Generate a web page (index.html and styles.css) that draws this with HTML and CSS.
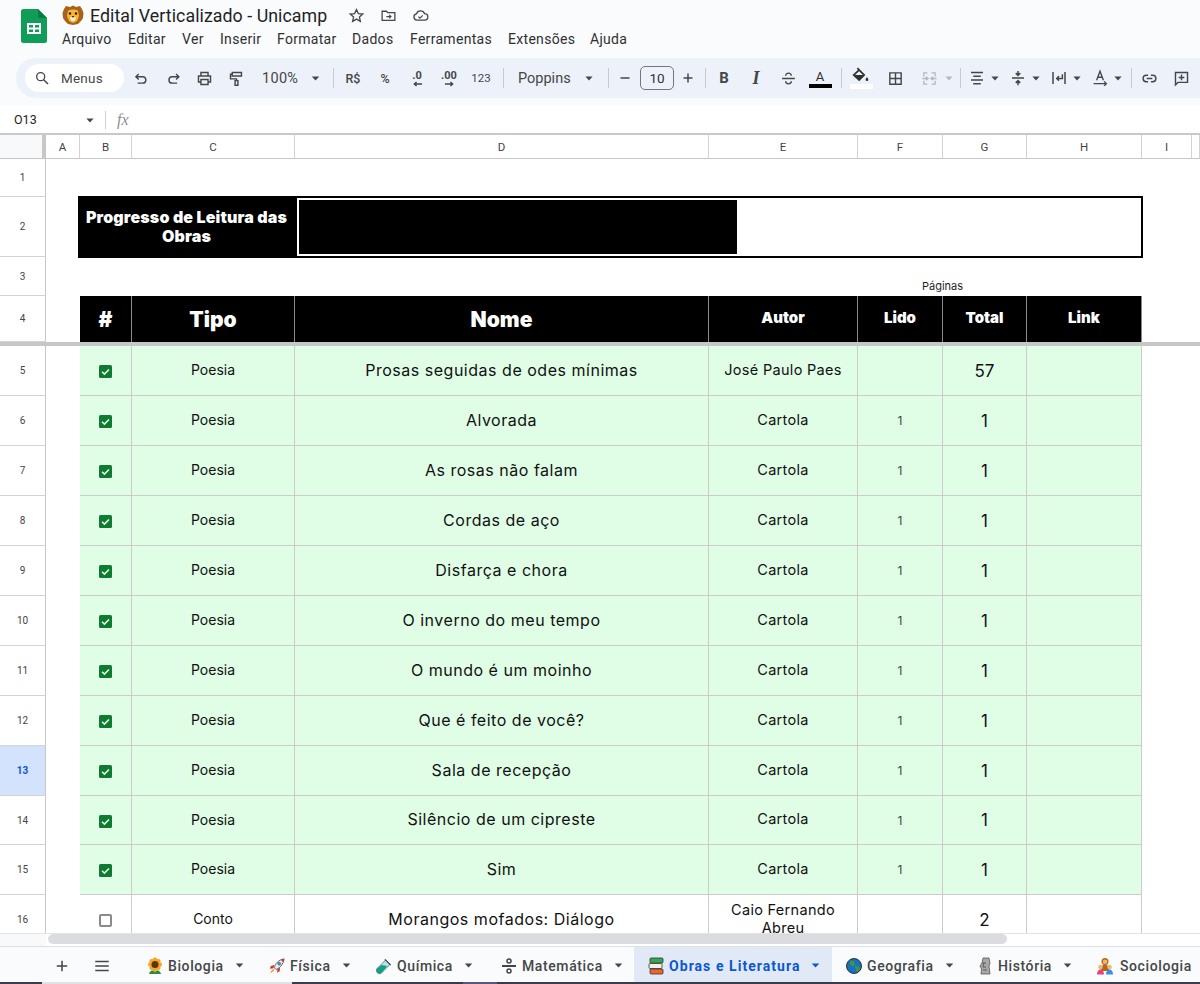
FILE: index.html
```html
<!DOCTYPE html>
<html lang="pt-BR">
<head>
<meta charset="utf-8">
<title>Edital Verticalizado - Unicamp</title>
<link rel="stylesheet" href="styles.css">
</head>
<body>
<svg class="defs" width="0" height="0" aria-hidden="true">
  <symbol id="check" viewBox="0 0 13 13"><rect width="13" height="13" rx="1.500" fill="#0f7b30"/><path d="M3 6.800l2.400 2.300L10 4.400" fill="none" stroke="#e8f8ea" stroke-width="1.500"/></symbol>
  <symbol id="caret" viewBox="0 0 10 6"><path d="M0.500 0.500h9L5 5.500z" fill="currentColor"/></symbol>
</svg>

<header class="titlebar">
  <svg class="logo" viewBox="0 0 26 34"><path d="M2.500 0H17l9 9v22.500a2.500 2.500 0 0 1-2.500 2.500h-21A2.500 2.500 0 0 1 0 31.500V2.500A2.500 2.500 0 0 1 2.500 0z" fill="#0f9d58"/><path d="M17 0l9 9h-7a2 2 0 0 1-2-2z" fill="#0b7a43"/><path d="M6 14h14v11H6z" fill="#fff"/><path d="M8 16h4v2.500H8zM14 16h4v2.500h-4zM8 20.500h4V23H8zM14 20.500h4V23h-4z" fill="#0f9d58"/></svg>
  <div class="titlecol">
    <div class="titleline">
      <svg class="lion" viewBox="0 0 22 20"><path d="M4 1l4 1 3-1.500L14 2l4-1 2 3 1.500 4-.5 5-2 3-3 3-5 1-5-1-3-3-2-3L.5 8 2 4z" fill="#a8621b"/><path d="M6 6c1-2 9-2 10 0l1 5-2 5-4 2-4-2-2-5z" fill="#f7b733"/><circle cx="8" cy="8.500" r="1.200" fill="#2b1a0d"/><circle cx="14" cy="8.500" r="1.200" fill="#2b1a0d"/><path d="M8 13c1-2 5-2 6 0l-1.500 3h-3z" fill="#fff3dc"/><path d="M9.500 11h3L11 13z" fill="#5a2b12"/></svg>
      <span class="doc">Edital Verticalizado - Unicamp</span>
      <svg class="ti star" viewBox="0 0 24 24"><path d="M12 3.500l2.600 5.800 6.300.6-4.800 4.200 1.400 6.200L12 17.100l-5.500 3.200 1.400-6.200-4.800-4.200 6.300-.6z" fill="none" stroke="#444746" stroke-width="1.800"/></svg>
      <svg class="ti" viewBox="0 0 24 24"><path d="M3 6h6l2 2h10v11H3z" fill="none" stroke="#444746" stroke-width="1.800"/><path d="M9 13.500h6M13 11l2.500 2.500L13 16" fill="none" stroke="#444746" stroke-width="1.600"/></svg>
      <svg class="ti" viewBox="0 0 24 24"><path d="M7 18.500a4.500 4.500 0 0 1-.7-8.900A6 6 0 0 1 17.700 9.500 4.500 4.500 0 0 1 18 18.500z" fill="none" stroke="#444746" stroke-width="1.800"/><path d="M9 13.500l2.200 2.200 4-4" fill="none" stroke="#444746" stroke-width="1.600"/></svg>
    </div>
    <nav class="menu"><span>Arquivo</span><span>Editar</span><span>Ver</span><span>Inserir</span><span>Formatar</span><span>Dados</span><span>Ferramentas</span><span>Extensões</span><span>Ajuda</span></nav>
  </div>
</header>

<div class="toolbar">
  <div class="search"><svg viewBox="0 0 24 24"><circle cx="10" cy="10" r="6" fill="none" stroke="#444746" stroke-width="2"/><path d="M14.500 14.500L21 21" stroke="#444746" stroke-width="2.200"/></svg><span>Menus</span></div>
  <div class="tb"><svg viewBox="0 0 24 24"><path d="M9.500 5.500L5.500 9.500l4 4M5.500 9.500H15a4.500 4.500 0 0 1 0 9H8" fill="none" stroke="#444746" stroke-width="2"/></svg></div>
  <div class="tb"><svg viewBox="0 0 24 24"><path d="M17 5.500l4 4-4 4M21 9.500H11.500a4.500 4.500 0 0 0 0 9h7" fill="none" stroke="#444746" stroke-width="2"/></svg></div>
  <div class="tb"><svg viewBox="0 0 24 24"><path d="M7 8V3.500h10V8M7 17H3.500V8.500h17V17H17M7 13.500h10v7H7z" fill="none" stroke="#444746" stroke-width="2"/></svg></div>
  <div class="tb"><svg viewBox="0 0 24 24"><path d="M6 3.500h13v5H6zM6 6H3.500v6.500H12V15M10 15h4v6.500h-4z" fill="none" stroke="#444746" stroke-width="2"/></svg></div>
  <div class="tb zoomsel"><span>100%</span><svg class="caret" viewBox="0 0 10 6"><use href="#caret"/></svg></div>
  <i class="sep s-a"></i>
  <div class="tb txt">R$</div>
  <div class="tb txt">%</div>
  <div class="tb dec"><b>.0</b><svg viewBox="0 0 12 6"><path d="M11 3H3M5 .8L2.500 3 5 5.200" fill="none" stroke="#444746" stroke-width="1.500"/></svg></div>
  <div class="tb dec d2"><b>.00</b><svg viewBox="0 0 12 6"><path d="M1 3h8M7 .8L9.500 3 7 5.200" fill="none" stroke="#444746" stroke-width="1.500"/></svg></div>
  <div class="tb txt small">123</div>
  <i class="sep s-b"></i>
  <div class="fontsel"><span>Poppins</span><svg class="caret" viewBox="0 0 10 6"><use href="#caret"/></svg></div>
  <i class="sep s-c"></i>
  <div class="tb minus"><svg viewBox="0 0 24 24"><path d="M6 12h12" stroke="#444746" stroke-width="2"/></svg></div>
  <div class="sizebox">10</div>
  <div class="tb plus"><svg viewBox="0 0 24 24"><path d="M6 12h12M12 6v12" stroke="#444746" stroke-width="2"/></svg></div>
  <i class="sep s-d"></i>
  <div class="tb glyph bold">B</div>
  <div class="tb glyph ital">I</div>
  <div class="tb"><svg viewBox="0 0 24 24"><path d="M3 12h18M16 8c0-2-1.500-3.500-4-3.500S8 6 8 8M8 16c0 2 1.500 3.500 4 3.500s4-1.500 4-3.500" fill="none" stroke="#444746" stroke-width="1.900"/></svg></div>
  <div class="tb colorA"><span>A</span><i></i></div>
  <i class="sep s-e"></i>
  <div class="tb fill"><svg viewBox="0 0 24 18"><path d="M8 1l7.500 7.500L10 14 4 8.500 9.500 3.500" fill="none" stroke="#303030" stroke-width="1.800"/><path d="M4.500 8.500h10.500L10 13.800z" fill="#303030"/><path d="M18.500 10.500c1 1.500 1.500 2 1.500 3a1.500 1.500 0 0 1-3 0c0-1 .5-1.500 1.500-3z" fill="#303030"/></svg><i></i></div>
  <div class="tb s-f"><svg viewBox="0 0 24 24"><path d="M4 4h16v16H4zM12 4v16M4 12h16" fill="none" stroke="#444746" stroke-width="2"/></svg></div>
  <div class="tb merge"><svg viewBox="0 0 24 24"><path d="M9 4H4v5M4 15v5h5M15 4h5v5M20 15v5h-5M2 12h8M7 9.500l3 2.500-3 2.500M22 12h-8M17 9.500L14 12l3 2.500" fill="none" stroke="#b4b7bb" stroke-width="1.800"/></svg></div>
  <svg class="caret split off" viewBox="0 0 10 6"><use href="#caret"/></svg>
  <i class="sep s-g"></i>
  <div class="tb nar"><svg viewBox="0 0 24 24"><path d="M4 4.500h16M7 9.500h10M4 14.500h16M7 19.500h10" stroke="#444746" stroke-width="2"/></svg></div>
  <svg class="caret split" viewBox="0 0 10 6"><use href="#caret"/></svg>
  <div class="tb nar g5"><svg viewBox="0 0 24 24"><path d="M4 12h16M12 2.500v5M9 5.500l3 3 3-3M12 21.500v-5M9 18.500l3-3 3 3" fill="none" stroke="#444746" stroke-width="2"/></svg></div>
  <svg class="caret split" viewBox="0 0 10 6"><use href="#caret"/></svg>
  <div class="tb nar g5"><svg viewBox="0 0 24 24"><path d="M4 4v16M20 4v16M16.500 7v5.500H9M12 9.500l-3 3 3 3" fill="none" stroke="#444746" stroke-width="2"/></svg></div>
  <svg class="caret split" viewBox="0 0 10 6"><use href="#caret"/></svg>
  <div class="tb nar g5"><svg viewBox="0 0 24 24"><path d="M7.500 15L12 3l4.500 12M9 11h6M3.500 19.500h16M17.500 16.500l3 3-3 3" fill="none" stroke="#444746" stroke-width="1.800"/></svg></div>
  <svg class="caret split" viewBox="0 0 10 6"><use href="#caret"/></svg>
  <i class="sep s-h"></i>
  <div class="tb"><svg viewBox="0 0 24 24"><path d="M10 7.500H7.500a4.500 4.500 0 0 0 0 9H10M14 7.500h2.500a4.500 4.500 0 0 1 0 9H14M8 12h8" fill="none" stroke="#444746" stroke-width="2"/></svg></div>
  <div class="tb"><svg viewBox="0 0 24 24"><path d="M3.500 3.500h17v14H7l-3.500 3.500zM12 6.500v8M8 10.500h8" fill="none" stroke="#444746" stroke-width="2"/></svg></div>
</div>

<div class="formula">
  <span class="ref">O13</span>
  <svg class="caret" viewBox="0 0 10 6"><use href="#caret"/></svg>
  <i class="fsep"></i>
  <span class="fx">fx</span>
</div>

<main class="sheet">
  <div class="corner"></div>
  <div class="ch">A</div><div class="ch">B</div><div class="ch">C</div><div class="ch">D</div><div class="ch">E</div><div class="ch">F</div><div class="ch">G</div><div class="ch">H</div><div class="ch">I</div><div class="ch"></div>

  <div class="rh">1</div><div class="blank span-all"></div>

  <div class="rh">2</div><div class="blank"></div>
  <div class="ptitle"><span>Progresso de Leitura das Obras</span></div>
  <div class="pbar"><div class="pfill"></div></div>
  <div class="blank span-rest"></div>

  <div class="rh">3</div><div class="blank span-5"></div>
  <div class="paginas">Páginas</div>
  <div class="blank span-3"></div>

  <div class="rh">4</div><div class="blank"></div>
  <div class="hd big">#</div><div class="hd big">Tipo</div><div class="hd big">Nome</div><div class="hd">Autor</div><div class="hd">Lido</div><div class="hd">Total</div><div class="hd">Link</div>
  <div class="blank span-rest"></div>

  <div class="freeze"></div>

  <div class="rh">5</div><div class="blank"></div>
  <div class="c g"><svg class="cb"><use href="#check"/></svg></div><div class="c g tp">Poesia</div><div class="c g nm">Prosas seguidas de odes mínimas</div><div class="c g au">José Paulo Paes</div><div class="c g"></div><div class="c g tot">57</div><div class="c g"></div><div class="blank span-rest"></div>

  <div class="rh">6</div><div class="blank"></div>
  <div class="c g"><svg class="cb"><use href="#check"/></svg></div><div class="c g tp">Poesia</div><div class="c g nm">Alvorada</div><div class="c g au">Cartola</div><div class="c g ld">1</div><div class="c g tot">1</div><div class="c g"></div><div class="blank span-rest"></div>

  <div class="rh">7</div><div class="blank"></div>
  <div class="c g"><svg class="cb"><use href="#check"/></svg></div><div class="c g tp">Poesia</div><div class="c g nm">As rosas não falam</div><div class="c g au">Cartola</div><div class="c g ld">1</div><div class="c g tot">1</div><div class="c g"></div><div class="blank span-rest"></div>

  <div class="rh">8</div><div class="blank"></div>
  <div class="c g"><svg class="cb"><use href="#check"/></svg></div><div class="c g tp">Poesia</div><div class="c g nm">Cordas de aço</div><div class="c g au">Cartola</div><div class="c g ld">1</div><div class="c g tot">1</div><div class="c g"></div><div class="blank span-rest"></div>

  <div class="rh">9</div><div class="blank"></div>
  <div class="c g"><svg class="cb"><use href="#check"/></svg></div><div class="c g tp">Poesia</div><div class="c g nm">Disfarça e chora</div><div class="c g au">Cartola</div><div class="c g ld">1</div><div class="c g tot">1</div><div class="c g"></div><div class="blank span-rest"></div>

  <div class="rh">10</div><div class="blank"></div>
  <div class="c g"><svg class="cb"><use href="#check"/></svg></div><div class="c g tp">Poesia</div><div class="c g nm">O inverno do meu tempo</div><div class="c g au">Cartola</div><div class="c g ld">1</div><div class="c g tot">1</div><div class="c g"></div><div class="blank span-rest"></div>

  <div class="rh">11</div><div class="blank"></div>
  <div class="c g"><svg class="cb"><use href="#check"/></svg></div><div class="c g tp">Poesia</div><div class="c g nm">O mundo é um moinho</div><div class="c g au">Cartola</div><div class="c g ld">1</div><div class="c g tot">1</div><div class="c g"></div><div class="blank span-rest"></div>

  <div class="rh">12</div><div class="blank"></div>
  <div class="c g"><svg class="cb"><use href="#check"/></svg></div><div class="c g tp">Poesia</div><div class="c g nm">Que é feito de você?</div><div class="c g au">Cartola</div><div class="c g ld">1</div><div class="c g tot">1</div><div class="c g"></div><div class="blank span-rest"></div>

  <div class="rh sel">13</div><div class="blank"></div>
  <div class="c g"><svg class="cb"><use href="#check"/></svg></div><div class="c g tp">Poesia</div><div class="c g nm">Sala de recepção</div><div class="c g au">Cartola</div><div class="c g ld">1</div><div class="c g tot">1</div><div class="c g"></div><div class="blank span-rest"></div>

  <div class="rh">14</div><div class="blank"></div>
  <div class="c g"><svg class="cb"><use href="#check"/></svg></div><div class="c g tp">Poesia</div><div class="c g nm">Silêncio de um cipreste</div><div class="c g au">Cartola</div><div class="c g ld">1</div><div class="c g tot">1</div><div class="c g"></div><div class="blank span-rest"></div>

  <div class="rh">15</div><div class="blank"></div>
  <div class="c g"><svg class="cb"><use href="#check"/></svg></div><div class="c g tp">Poesia</div><div class="c g nm">Sim</div><div class="c g au">Cartola</div><div class="c g ld">1</div><div class="c g tot">1</div><div class="c g"></div><div class="blank span-rest"></div>

  <div class="rh">16</div><div class="blank"></div>
  <div class="c"><i class="cbo"></i></div><div class="c tp">Conto</div><div class="c nm">Morangos mofados: Diálogo</div><div class="c au">Caio Fernando Abreu</div><div class="c"></div><div class="c tot">2</div><div class="c"></div><div class="blank span-rest"></div>
</main>

<div class="scroll"><div class="scorner"></div><div class="thumb"></div></div>

<footer class="tabs">
  <div class="tabtool plus-t"><svg viewBox="0 0 24 24"><path d="M5 12h14M12 5v14" stroke="#444746" stroke-width="2"/></svg></div>
  <div class="tabtool all"><svg viewBox="0 0 24 24"><path d="M3 6h18M3 12h18M3 18h18" stroke="#444746" stroke-width="2"/></svg></div>

  <div class="tab t1">
    <svg class="em" viewBox="0 0 16 18"><path d="M8 11v6M8 15C5 12 3 14 2 17h12c-1-3-3-5-6-2z" fill="#2f8a3b"/><g fill="#f5a623"><circle cx="8" cy="2.800" r="2.300"/><circle cx="8" cy="12.200" r="2.300"/><circle cx="3.300" cy="7.500" r="2.300"/><circle cx="12.700" cy="7.500" r="2.300"/><circle cx="4.700" cy="4.200" r="2.300"/><circle cx="11.300" cy="4.200" r="2.300"/><circle cx="4.700" cy="10.800" r="2.300"/><circle cx="11.300" cy="10.800" r="2.300"/></g><circle cx="8" cy="7.500" r="3.500" fill="#5b3413"/></svg>
    <span>Biologia</span><svg class="caret" viewBox="0 0 10 6"><use href="#caret"/></svg>
  </div>
  <div class="tab t2">
    <svg class="em" viewBox="0 0 18 18"><path d="M6 11C7 6 11 2 17 1c-1 6-4 10-9 12z" fill="#e8edf2" stroke="#333" stroke-width=".8"/><path d="M13 1.800L17 1l-.8 4z" fill="#d8322b"/><path d="M6 8L2 9l-1 3 4-.5zM9.500 12.500L9 16.500l3-1.500 .5-4z" fill="#d8322b"/><circle cx="11.500" cy="6.500" r="1.600" fill="#3b9be0" stroke="#333" stroke-width=".5"/><path d="M5.500 12.500C3.500 13 2 15 1.500 17c2-.5 4-2 4.500-4z" fill="#f59b23"/></svg>
    <span>Física</span><svg class="caret" viewBox="0 0 10 6"><use href="#caret"/></svg>
  </div>
  <div class="tab t3">
    <svg class="em" viewBox="0 0 18 18"><path d="M11 2l5 5-9.500 9.500a3.500 3.500 0 0 1-5-5z" fill="#b6e3ea" stroke="#37474f" stroke-width=".7"/><path d="M6.500 8l6 1-6 7.500a3.500 3.500 0 0 1-5-5z" fill="#14a085"/><path d="M10 1.500l6.500 6.500" stroke="#37474f" stroke-width="1.300"/></svg>
    <span>Química</span><svg class="caret" viewBox="0 0 10 6"><use href="#caret"/></svg>
  </div>
  <div class="tab t4">
    <svg class="em" viewBox="0 0 16 16"><path d="M1 8h14" stroke="#444" stroke-width="2"/><circle cx="8" cy="3" r="2" fill="none" stroke="#444" stroke-width="1.500"/><circle cx="8" cy="13" r="2" fill="none" stroke="#444" stroke-width="1.500"/></svg>
    <span>Matemática</span><svg class="caret" viewBox="0 0 10 6"><use href="#caret"/></svg>
  </div>
  <div class="tab t5 active">
    <svg class="em" viewBox="0 0 16 18"><rect x="2" y="1" width="13" height="5" rx="1" fill="#34a853" stroke="#333" stroke-width=".8"/><rect x="1" y="6.500" width="13" height="5" rx="1" fill="#f3efe6" stroke="#333" stroke-width=".8"/><rect x="2" y="12" width="13" height="5" rx="1" fill="#f0662a" stroke="#333" stroke-width=".8"/></svg>
    <span>Obras e Literatura</span><svg class="caret" viewBox="0 0 10 6"><use href="#caret"/></svg>
  </div>
  <div class="tab t6">
    <svg class="em" viewBox="0 0 16 16"><circle cx="8" cy="8" r="7.500" fill="#1b6fc0" stroke="#222" stroke-width=".9"/><path d="M4 2.500l4 1 1 3-2 2-3-2zM9 8l4 .5 1 2-2 3.500-2-1z" fill="#3a9a40"/></svg>
    <span>Geografia</span><svg class="caret" viewBox="0 0 10 6"><use href="#caret"/></svg>
  </div>
  <div class="tab t7">
    <svg class="em moai" viewBox="0 0 12 18"><path d="M4 1h6l1 5-1 3 1 8H2l.5-5L1 9l2-3z" fill="#a8a8a8" stroke="#555" stroke-width=".8"/><path d="M3 6h4M5 6l-1 4h3M4 13h4" stroke="#555" stroke-width=".9" fill="none"/></svg>
    <span>História</span><svg class="caret" viewBox="0 0 10 6"><use href="#caret"/></svg>
  </div>
  <div class="tab t8">
    <svg class="em fam" viewBox="0 0 18 18"><circle cx="9" cy="4.500" r="3.500" fill="#b5651d"/><circle cx="9" cy="4.800" r="2.300" fill="#f2b56b"/><path d="M5 14c0-4 1.500-6.500 4-6.500s4 2.500 4 6.500z" fill="#b5651d"/><circle cx="4.500" cy="10" r="2.300" fill="#f2b56b"/><circle cx="13.500" cy="10" r="2.300" fill="#f2b56b"/><path d="M1 17.500c0-3 1.500-5 3.500-5S8 14.500 8 17.500z" fill="#e8407b"/><path d="M10 17.500c0-3 1.500-5 3.500-5s3.500 2 3.500 5z" fill="#3b8fe0"/></svg>
    <span>Sociologia</span>
  </div>
</footer>
<div class="taskbar"><i class="k1"></i><i class="k2"></i><i class="k3"></i><i class="k4"></i><i class="k5"></i></div>
</body>
</html>
```

FILE: styles.css
```css
* { box-sizing: border-box; }
html, body { margin: 0; padding: 0; }
body {
  width: 1200px;
  height: 984px;
  overflow: hidden;
  background: #f9fbfd;
  font-family: "Roboto", "Liberation Sans", sans-serif;
  color: #1f1f1f;
}
i { font-style: normal; display: block; }
.defs { display: block; height: 0; }
svg { display: block; }

/* Title bar */
.titlebar { height: 58px; display: flex; padding: 9px 0 0 21px; background: #f9fbfd; }
.logo { width: 26px; height: 34px; flex: none; }
.titlecol { margin: -6px 0 0 15px; }
.titleline { display: flex; align-items: center; height: 24px; }
.lion { width: 22px; height: 20px; margin-right: 6px; }
.doc { font-size: 17.800px; letter-spacing: 0.050px; color: #1f1f1f; width: 258px; white-space: nowrap; }
.ti { width: 17px; height: 17px; margin-right: 15px; }
.menu { display: flex; height: 22px; margin-top: 1px; align-items: center; font-size: 14px; letter-spacing: .3px; color: #303030; }
.menu span:nth-child(1) { width: 66px; }
.menu span:nth-child(2) { width: 54px; }
.menu span:nth-child(3) { width: 38px; }
.menu span:nth-child(4) { width: 57px; }
.menu span:nth-child(5) { width: 75px; }
.menu span:nth-child(6) { width: 58px; }
.menu span:nth-child(7) { width: 98px; }
.menu span:nth-child(8) { width: 82px; }

/* Toolbar */
.toolbar {
  height: 40px;
  margin-left: 16px;
  padding-left: 9px;
  border-radius: 20px 0 0 20px;
  background: #edf2fa;
  display: flex;
  align-items: center;
  color: #444746;
}
.search { width: 99px; height: 28px; border-radius: 14px; background: #fff; display: flex; align-items: center; padding-left: 9px; font-size: 13.500px; color: #444746; flex: none; letter-spacing: .2px; }
.search svg { width: 16px; height: 16px; margin-right: 11px; }
.tb { width: 32px; height: 28px; flex: none; display: flex; align-items: center; justify-content: center; }
.tb svg { width: 17px; height: 17px; }
.caret { width: 8px; height: 5px; color: #444746; flex: none; }
.zoomsel { width: 72px; justify-content: flex-start; padding-left: 10px; font-size: 14.500px; letter-spacing: .3px; }
.zoomsel span { width: 49px; }
.zoomsel .caret { width: 9px; height: 5px; }
.sep { width: 1px; height: 20px; background: #c7c9cc; flex: none; }
.s-a { margin: 0 3px 0 9px; }
.s-b { margin-left: 6px; }
.s-c { margin-left: 8px; }
.s-d { margin: 0 2px 0 3px; }
.s-e { margin: 0 3px 0 5px; }
.s-g { margin: 0 4px 0 5px; }
.s-h { margin: 0 1px 0 7px; }
.s-f { margin-left: 2px; }
.txt { font-size: 12.500px; font-weight: 500; color: #444746; }
.small { font-size: 11.500px; font-weight: 400; }
.dec { flex-direction: column; font-size: 11px; line-height: 11px; color: #444746; }
.dec b { font-weight: 700; }
.dec svg { width: 11px; height: 6px; }
.fontsel { width: 96px; padding-left: 14px; display: flex; align-items: center; font-size: 14.500px; color: #444746; flex: none; }
.fontsel span { width: 67px; }
.minus { width: 31px; }
.plus { width: 28px; }
.minus svg, .plus svg { width: 18px; height: 18px; }
.sizebox { width: 34px; height: 24px; border: 1px solid #747775; border-radius: 5px; font-size: 13.500px; display: flex; align-items: center; justify-content: center; color: #303030; flex: none; }
.glyph { font-size: 15px; color: #444746; }
.bold { font-weight: 700; }
.ital { font-family: "Liberation Serif", serif; font-style: italic; font-size: 18px; font-weight: 700; }
.colorA { flex-direction: column; font-size: 13px; line-height: 15px; color: #303030; }
.colorA i { width: 23px; height: 4px; background: #000; }
.fill { flex-direction: column; }
.fill svg { width: 22px; height: 17px; }
.fill i { width: 23px; height: 5px; background: #fff; }
.merge { width: 28px; margin-left: 4px; }
.nar { width: 24px; }
.nar svg { width: 18px; height: 18px; }
.split { width: 8px; height: 5px; margin: 0 2px; }
.off { color: #b4b7bb; }
.g5 { margin-left: 5px; }

/* Formula bar */
.formula { height: 30px; margin-top: 7px; padding: 4px 0 0 14px; background: #fff; border-bottom: 2px solid #c9c9c9; display: flex; align-items: flex-start; }
.ref { width: 72px; font-size: 12.500px; line-height: 22px; color: #1f1f1f; }
.formula .caret { margin-top: 9px; }
.fsep { width: 1px; height: 18px; background: #d0d0d0; margin: 2px 0 0 11px; }
.fx { margin-left: 11px; font-family: "Liberation Serif", serif; font-style: italic; font-size: 16px; line-height: 22px; color: #8a8f94; }

/* Sheet */
.sheet {
  height: 798px;
  overflow: hidden;
  background: #fff;
  display: grid;
  grid-template-columns: 46px 34px 52px 163px 414px 149px 85px 84px 115px 50px 8px;
  grid-template-rows: 24px 38px 60px 39px 46px 4px 50px 50px 50px 50px 50px 50px 50px 50px 50px 49px 50px 50px;
}
.corner { background: #f8f9fa; border-right: 4px solid #c7c7c7; border-bottom: 1px solid #c7c7c7; }
.ch {
  display: flex; align-items: center; justify-content: center;
  font-size: 11.500px; color: #444;
  border-right: 1px solid #d4d4d4; border-bottom: 1px solid #c7c7c7;
  background: #fff;
}
.rh {
  display: flex; align-items: center; justify-content: center;
  font-size: 10px; color: #444;
  border-right: 1px solid #c7c7c7; border-bottom: 1px solid #d4d4d4;
  background: #fff;
}
.rh.sel { background: #d3e3fd; color: #0b57d0; font-weight: 700; }
.blank { background: #fff; }
.span-all { grid-column: 2 / -1; }
.span-rest { grid-column: span 2; }
.span-3 { grid-column: span 3; }
.span-5 { grid-column: span 5; }
.ptitle {
  grid-column: span 2;
  position: relative;
  z-index: 1;
  margin: -1px 0 -1px -2px;
  background: #000;
  color: #fff;
  font-family: "Inter", sans-serif;
  font-weight: 900;
  font-size: 16px;
  line-height: 19px;
  letter-spacing: .15px;
  text-align: center;
  display: flex;
  align-items: center;
  justify-content: center;
  padding: 0 2px;
}
.pbar {
  grid-column: 5 / 10;
  position: relative;
  z-index: 1;
  margin: -1px -1px -1px 0;
  border: 2px solid #000;
  padding: 2px 0 2px 2px;
  background: #fff;
}
.pfill { width: 438px; height: 100%; background: #000; }
.paginas {
  grid-column: span 2;
  font-family: "Inter", sans-serif;
  font-size: 11px;
  color: #1f1f1f;
  text-align: center;
  line-height: 14px;
  padding-top: 22px;
  background: #fff;
}
.hd {
  background: #000;
  color: #fff;
  border-right: 1px solid #8a8a8a;
  display: flex; align-items: center; justify-content: center;
  font-family: "Inter", sans-serif;
  font-weight: 900;
  font-size: 15px;
  padding-bottom: 3px;
}
.big { font-size: 21px; padding-bottom: 0; }
.freeze { grid-column: 1 / -1; background: #c7c7c7; }
.c {
  display: flex; align-items: center; justify-content: center;
  text-align: center;
  border-right: 1px solid #cccccc;
  border-bottom: 1px solid #cccccc;
  font-family: "Inter", sans-serif;
  color: #111;
  background: #fff;
}
.g { background: #e0fde6; }
.tp { font-size: 14px; padding-bottom: 2px; }
.nm { font-size: 16px; letter-spacing: .52px; padding-bottom: 2px; }
.au { font-size: 14.500px; letter-spacing: .3px; line-height: 18px; padding: 0 14px 2px; }
.ld { font-size: 12px; color: #1f4f3f; }
.tot { font-size: 17px; }
.cb { width: 13px; height: 13px; margin-top: 2px; }
.cbo { width: 13px; height: 13px; margin-top: 2px; border: 2px solid #8a8a8a; border-radius: 2px; background: #fff; }

/* Scroll */
.scroll { height: 13px; display: flex; background: #fff; border-top: 1px solid #e3e3e3; }
.scorner { width: 46px; background: #f8f9fa; }
.thumb { width: 959px; height: 10px; margin: 0 0 0 2px; background: #dadce0; border-radius: 5px; }

/* Tabs */
.tabs {
  height: 36px;
  display: flex;
  align-items: stretch;
  background: #f9fbfd;
  border-top: 1px solid #dde0e3;
  overflow: hidden;
}
.tabtool { width: 40px; padding-top: 2px; display: flex; align-items: center; justify-content: center; flex: none; }
.tabtool svg { width: 18px; height: 18px; }
.plus-t { margin-left: 42px; }
.all { margin-right: 11px; }
.tab {
  display: flex; align-items: center;
  padding: 2px 0 0 14px;
  font-size: 14px;
  font-weight: 500;
  letter-spacing: .6px;
  color: #444746;
  flex: none;
  white-space: nowrap;
}
.em { width: 16px; height: 18px; margin-right: 5px; flex: none; }
.tab .caret { margin-left: 11px; width: 9px; height: 5px; }
.t1 { width: 122px; }
.t2 { width: 107px; }
.t3 { width: 125px; }
.t4 { width: 147px; }
.t5 { width: 198px; }
.t6 { width: 133px; }
.t7 { width: 117px; }
.t8 { width: 118px; }
.moai { width: 12px; margin: 0 7px 0 0; }
.fam { width: 18px; margin-right: 6px; }
.active { background: #e1e9f7; color: #0b57d0; font-weight: 700; letter-spacing: 1.05px; }
.active .caret { color: #0b57d0; }

/* Window strip */
.taskbar { height: 2px; display: flex; }
.k1 { width: 42px; background: #3b3b4a; }
.k2 { width: 250px; background: #dfe1e5; }
.k3 { width: 171px; background: #3b3b4a; }
.k4 { width: 34px; background: #5a5680; }
.k5 { flex: 1; background: #3b3b4a; }
```
